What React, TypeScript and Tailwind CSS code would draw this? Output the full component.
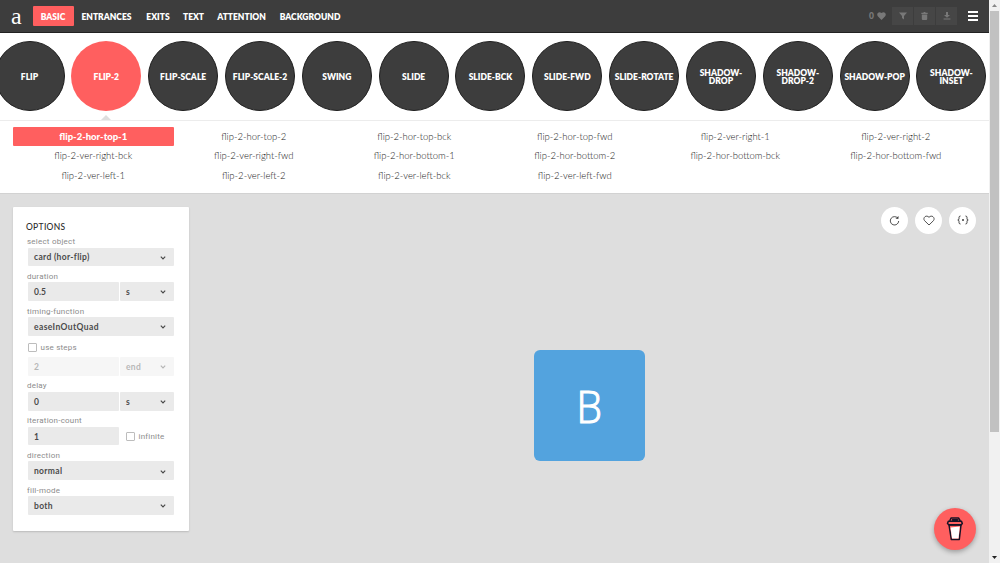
import React from "react";

const caps = "font-['Lato','Inter',sans-serif] font-extrabold";

const NAV = [
  { label: "BASIC", cls: "w-[41px] bg-[#ff5f5f] rounded-[1px]" },
  { label: "ENTRANCES", cls: "w-[66px]" },
  { label: "EXITS", cls: "w-[37px]" },
  { label: "TEXT", cls: "w-[34px]" },
  { label: "ATTENTION", cls: "w-[62px]" },
  { label: "BACKGROUND", cls: "w-[75px]" },
];

const CIRCLES = [
  "FLIP", "FLIP-2", "FLIP-SCALE", "FLIP-SCALE-2", "SWING", "SLIDE", "SLIDE-BCK",
  "SLIDE-FWD", "SLIDE-ROTATE", "SHADOW-\nDROP", "SHADOW-\nDROP-2", "SHADOW-POP", "SHADOW-\nINSET",
];

const VARIANTS = [
  "flip-2-hor-top-1", "flip-2-hor-top-2", "flip-2-hor-top-bck", "flip-2-hor-top-fwd", "flip-2-ver-right-1", "flip-2-ver-right-2",
  "flip-2-ver-right-bck", "flip-2-ver-right-fwd", "flip-2-hor-bottom-1", "flip-2-hor-bottom-2", "flip-2-hor-bottom-bck", "flip-2-hor-bottom-fwd",
  "flip-2-ver-left-1", "flip-2-ver-left-2", "flip-2-ver-left-bck", "flip-2-ver-left-fwd",
];

function Chevron() {
  return (
    <svg width="6" height="4" viewBox="0 0 6 4" className="shrink-0" fill="none" stroke="currentColor" strokeWidth="1.2">
      <path d="M0.8 0.7 3 2.9 5.2 0.7" />
    </svg>
  );
}

function Field({ value, select, className = "" }: { value: string; select?: boolean; className?: string }) {
  return (
    <div className={`flex h-full items-center justify-between rounded-[1px] bg-[#eaeaea] pl-[6.500px] pr-[8px] pt-[1.500px] text-[8.500px] font-bold leading-none text-[#4a4a4a] font-['Lato',sans-serif] ${className}`}>
      <span>{value}</span>
      {select && <Chevron />}
    </div>
  );
}

function Label({ children }: { children: React.ReactNode }) {
  return <div className="-ml-[0.500px] flex h-[16.100px] items-center pt-[5px] font-['Roboto',sans-serif] text-[8px] leading-none tracking-[0.220px] text-[#8c8c8c]">{children}</div>;
}

function Row({ children, className = "" }: { children: React.ReactNode; className?: string }) {
  return <div className={`flex h-[18.700px] gap-px ${className}`}>{children}</div>;
}

function Check({ label }: { label: string }) {
  return (
    <div className="flex items-center gap-1 font-['Roboto',sans-serif] text-[8px] leading-none tracking-[0.220px] text-[#8c8c8c]">
      <span className="h-[9px] w-[9px] rounded-[1px] border border-[#bdbdbd] bg-white" />
      <span className="pt-px">{label}</span>
    </div>
  );
}

function Header() {
  return (
    <header className="flex h-[33px] shrink-0 items-center border-b border-[#222] bg-[#3d3d3d] pl-[11px] pr-[11px]">
      <span className="w-[21.500px] pb-[1px] font-['Liberation_Serif',serif] text-[24px] leading-none text-white">a</span>
      <nav className="flex h-5 text-[8.500px] text-white">
        {NAV.map((n) => (
          <span key={n.label} className={`flex h-5 items-center justify-center whitespace-nowrap pt-[2px] ${caps} ${n.cls}`}>{n.label}</span>
        ))}
      </nav>
      <div className="ml-auto flex items-center text-[#787878]">
        <span className={`mr-[3px] pt-px text-[8.500px] ${caps}`}>0</span>
        <svg width="9" height="8" viewBox="0 0 9 8" className="mr-[6px]" fill="currentColor">
          <path d="M4.5 8 .8 4.2C-1 2 1.7-1.4 4.5 1 7.300-1.400 10 2 8.200 4.200Z" />
        </svg>
        <div className="flex gap-px">
          <span className="flex h-[18px] w-[21px] items-center justify-center bg-[#464646]">
            <svg width="8" height="8" viewBox="0 0 8 8" fill="currentColor"><path d="M0 .5h8L5 4v3.500L3 6V4Z" /></svg>
          </span>
          <span className="flex h-[18px] w-[21px] items-center justify-center bg-[#464646]">
            <svg width="7" height="8" viewBox="0 0 7 8" fill="currentColor"><path d="M.3.8h2L2.800 0h1.400l.5.8h2V2H.3ZM.8 2.500h5.400V7q0 1-1 1H1.800q-1 0-1-1Z" /></svg>
          </span>
          <span className="flex h-[18px] w-[21px] items-center justify-center bg-[#464646]">
            <svg width="8" height="8" viewBox="0 0 8 8" fill="currentColor"><path d="M3 0h2v3h2L4 5.800 1 3h2ZM.6 6.500h6.800v1.100H.6Z" /></svg>
          </span>
        </div>
        <div className="ml-[11px] flex w-[10px] flex-col gap-[2px]">
          <i className="h-[2px] bg-white" /><i className="h-[2px] bg-white" /><i className="h-[2px] bg-white" />
        </div>
      </div>
    </header>
  );
}

function Options() {
  return (
    <section className="h-[324px] w-[176px] shrink-0 rounded-[1px] bg-white pl-[14.500px] pr-[15px] pt-[14px] shadow-[0_1px_2px_rgba(0,0,0,0.16)]">
      <h2 className="-ml-[1.500px] h-[11px] font-['Lato',sans-serif] text-[8.500px] font-medium leading-[12px] tracking-[0.300px] text-[#2d2d2d]">OPTIONS</h2>
      <Label>select object</Label>
      <Row><Field value="card (hor-flip)" select className="w-full tracking-[0.320px]" /></Row>
      <Label>duration</Label>
      <Row><Field value="0.5" className="w-[91px]" /><Field value="s" select className="flex-1" /></Row>
      <Label>timing-function</Label>
      <Row><Field value="easeInOutQuad" select className="w-full tracking-[0.400px]" /></Row>
      <div className="flex h-[21.300px] items-center pt-[3px]"><Check label="use steps" /></div>
      <Row className="opacity-40"><Field value="2" className="w-[91px]" /><Field value="end" select className="flex-1 tracking-[0.320px]" /></Row>
      <Label>delay</Label>
      <Row><Field value="0" className="w-[91px]" /><Field value="s" select className="flex-1" /></Row>
      <Label>iteration-count</Label>
      <Row><Field value="1" className="mr-[6px] w-[91px]" /><Check label="infinite" /></Row>
      <Label>direction</Label>
      <Row><Field value="normal" select className="w-full tracking-[0.320px]" /></Row>
      <Label>fill-mode</Label>
      <Row><Field value="both" select className="w-full tracking-[0.320px]" /></Row>
    </section>
  );
}

function RoundButton({ children }: { children: React.ReactNode }) {
  return <button className="flex h-[27px] w-[27px] items-center justify-center rounded-full bg-white text-[#3d3d3d]">{children}</button>;
}

export default function App() {
  return (
    <div className="flex h-[563px] w-[1000px] overflow-hidden bg-[#dedede] font-['Liberation_Sans',sans-serif]">
      <div className="flex w-[989px] flex-col overflow-hidden">
        <Header />
        <div className="h-[88px] shrink-0 overflow-hidden border-b border-[#ececec] bg-white pt-2">
          <div className="-ml-[5.500px] flex gap-[6.830px]">
            {CIRCLES.map((label, i) => (
              <div key={label} className="flex shrink-0 flex-col items-center">
                <div className={`flex h-[70px] w-[70px] items-center justify-center whitespace-pre rounded-full pt-px text-center text-[8.500px] leading-[8px] text-white ${caps} ${i === 1 ? "bg-[#ff5f5f]" : "border border-[#1e1e1e] bg-[#3d3d3d]"}`}>
                  {label}
                </div>
                {i === 1 && <svg width="10" height="5" viewBox="0 0 10 5" className="mt-1" fill="#dedede"><path d="M0 5 5 0l5 5Z" /></svg>}
              </div>
            ))}
          </div>
        </div>
        <div className="grid h-[73px] shrink-0 auto-rows-[19.400px] grid-cols-6 border-b border-[#d2d2d2] bg-white pl-[13px] pr-[13px] pt-[6px] font-['Lato',sans-serif] text-[9.500px] text-[#222]">
          {VARIANTS.map((v, i) => (
            <span key={v} className={`flex items-center justify-center whitespace-nowrap pt-px ${i === 0 ? "rounded-[1px] bg-[#ff5f5f] font-black text-white" : "font-light"}`}>{v}</span>
          ))}
        </div>
        <main className="relative flex flex-1 items-start pl-[13px] pr-[13px] pt-[12.500px]">
          <Options />
          <div className="ml-[345px] mt-[143.500px] flex h-[111px] w-[111px] shrink-0 items-center justify-center rounded-[6px] bg-[#53a3de] font-['Open_Sans',sans-serif] text-[45px] font-light leading-none text-white">
            <span className="scale-x-90 pb-px [-webkit-text-stroke:1.200px_white]">B</span>
          </div>
          <div className="ml-auto flex h-[27px] gap-[7px]">
            <RoundButton>
              <svg width="11" height="11" viewBox="0 0 11 11" fill="none" stroke="currentColor" strokeWidth="0.9"><path d="M9 3.500A4.200 4.200 0 1 0 9.700 6" /><path d="M6.500 3.700h3V.9Z" fill="currentColor" stroke="none" /></svg>
            </RoundButton>
            <RoundButton>
              <svg width="12" height="11" viewBox="0 0 12 11" fill="none" stroke="currentColor" strokeWidth="0.9"><path d="M6 10 1.500 5.600C-.5 3 3-.8 6 2.300 9-.8 12.500 3 10.500 5.600Z" /></svg>
            </RoundButton>
            <RoundButton>
              <svg width="12" height="10" viewBox="0 0 12 10" fill="none" stroke="currentColor" strokeWidth="1"><path d="M3.500 1Q2 1 2 2.500V3.500Q2 5 .8 5 2 5 2 6.500v1Q2 9 3.500 9M8.500 1Q10 1 10 2.500V3.500Q10 5 11.200 5 10 5 10 6.500v1Q10 9 8.500 9" /><circle cx="6" cy="5" r="1" fill="currentColor" stroke="none" /></svg>
            </RoundButton>
          </div>
          <button className="absolute bottom-[13px] right-[13px] flex h-[42px] w-[42px] items-center justify-center rounded-full bg-[#ff5f5f] shadow-[0_2px_5px_rgba(0,0,0,0.3)]">
            <svg width="18" height="26" viewBox="0 0 18 26" stroke="#171326" strokeWidth="1.500" strokeLinejoin="round" strokeLinecap="round">
              <path d="M3 9h12l-1.700 14.500H5.300Z" fill="#ff5f5f" />
              <path d="M4.500 11.500 13.800 10.500 12.500 22.500H6Z" fill="#fff" stroke="none" />
              <path d="M2.300 5.300h13.200l.8 2.300-1 1.200H2.800L1.500 7.500ZM4 4.200 5 2h7.500l1.500 2.500M6.500 3.700h5" fill="none" />
            </svg>
          </button>
        </main>
      </div>
      <aside className="flex w-[11px] flex-col items-center bg-[#f1f1f1]">
        <div className="flex h-[11px] items-center"><svg width="5" height="3" viewBox="0 0 5 3" fill="#888"><path d="M0 3 2.500 0 5 3Z" /></svg></div>
        <div className="h-[421px] w-[9px] bg-[#c1c1c1]" />
        <div className="mt-auto flex h-[12px] items-center"><svg width="5" height="3" viewBox="0 0 5 3" fill="#222"><path d="M0 0 2.500 3 5 0Z" /></svg></div>
      </aside>
    </div>
  );
}
